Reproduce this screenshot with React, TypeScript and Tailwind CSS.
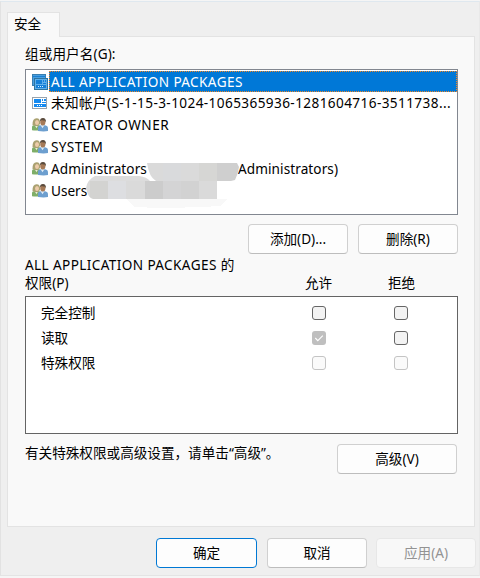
import React from "react";

type Kind = "packages" | "package" | "users";

function RowIcon({ kind }: { kind: Kind }) {
  if (kind === "packages")
    return (
      <svg className="h-4 w-4 shrink-0" viewBox="0 0 16 16">
        <rect x="0.5" y="0.5" width="13" height="11" fill="#4a9fe0" stroke="#3a7fb0" />
        <path d="M1 2.5h12" stroke="#1a80d2" />
        <rect x="2.5" y="4.5" width="13" height="11" fill="#5fb0ec" stroke="#2f749f" />
        <path d="M4 6h6v4H4zM11 6h1v2h-1zM13 6h1v2h-1zM11 9h3v1h-3zM4 11h10v3H4z" fill="#1580d8" />
        <path d="M6 12h1v1H6zM8 12h1v1H8zM10 12h1v1h-1z" fill="#d7efff" />
      </svg>
    );
  if (kind === "package")
    return (
      <svg className="h-4 w-4 shrink-0" viewBox="0 0 16 16">
        <rect x="0.5" y="2.5" width="14" height="11" fill="#fff" stroke="#98a3ad" />
        <path d="M2 4h7v4H2zM10 4h1v2h-1zM12 4h2v2h-2zM10 7h4v1h-4zM2 9h12v3H2z" fill="#168af0" />
        <path d="M5 10h1v1H5zM7 10h1v1H7zM9 10h1v1H9z" fill="#fff" />
      </svg>
    );
  return (
    <svg className="h-4 w-4 shrink-0" viewBox="0 0 16 16">
      <path d="M0 13.3V10q0-2 3-2h3q2 0 3 2v3q-4 1-9 .3Z" fill="#7fae68" />
      <path d="m2.5 8 2 3.3 1.8-3.3Z" fill="#edecd8" />
      <path d="M.5 8Q.3 1.2 4.5 1.2T8 7L6 9H3Z" fill="#aaa171" />
      <ellipse cx="5" cy="5.5" rx="2" ry="2.6" fill="#edccaa" />
      <path d="M6 14v-3q0-2.5 3-2.7h4q3 .5 3 3V14q-4 .8-10 0Z" fill="#6d9fcf" />
      <path d="m8.5 8.2 2 3 2-3Z" fill="#dfecf6" />
      <ellipse cx="10.8" cy="5" rx="2.6" ry="3.6" fill="#a67a57" />
      <path d="M8 4.3q0-3.3 3-3.3t3 4.4l-1.2-1.8q-2 0-3-.6Z" fill="#5a4b3d" />
    </svg>
  );
}

function Button({ children, className }: { children: React.ReactNode; className: string }) {
  return (
    <button className={`flex h-[30px] items-center justify-center rounded-[4px] border pb-px whitespace-nowrap ${className}`}>
      {children}
    </button>
  );
}

const normal = "border-[#d0d0d0] border-b-[#bdbdbd] bg-[#fdfdfd]";

function Box({ state }: { state: "on" | "off" | "disabled" }) {
  if (state === "on")
    return (
      <span className="flex h-[14px] w-[14px] items-center justify-center rounded-[3px] bg-[#bfbfbf]">
        <svg className="h-[14px] w-[14px]" viewBox="0 0 14 14">
          <path d="m3.3 7 2.5 2.6 5-5" fill="none" stroke="#fff" strokeWidth="1.1" />
        </svg>
      </span>
    );
  return (
    <span
      className={
        state === "off"
          ? "h-[14px] w-[14px] rounded-[3px] border border-[#666] bg-[#f3f3f3]"
          : "h-[14px] w-[14px] rounded-[3px] border border-[#c4c4c4] bg-[#fafafa]"
      }
    />
  );
}

const rows: { kind: Kind; text: React.ReactNode; tracking: string }[] = [
  {
    kind: "package",
    text: "未知帐户(S-1-15-3-1024-1065365936-1281604716-3511738...",
    tracking: "tracking-[0.4px]",
  },
  { kind: "users", text: "CREATOR OWNER", tracking: "tracking-[0.5px]" },
  { kind: "users", text: "SYSTEM", tracking: "tracking-[0.35px]" },
  {
    kind: "users",
    text: (
      <span className="flex">
        <span className="w-[187px]">Administrators</span>
        <span>Administrators)</span>
      </span>
    ),
    tracking: "tracking-[0.08px]",
  },
  { kind: "users", text: "Users", tracking: "" },
];

function Redaction() {
  return (
    <svg className="absolute top-[92px] left-[60px] h-[47px] w-[156px]" viewBox="86 162 156 47" shapeRendering="crispEdges">
      <path d="M126 199H227L220 206Q170 209 135 207Z" fill="#f8f8f8" />
      <defs>
        <clipPath id="upper">
          <path d="M147 163H237L239 167Q238 174 235 180L231 181H156Q149 177 147 163Z" />
        </clipPath>
        <clipPath id="lower">
          <path d="M86 188Q87 180 95 176H139Q147 177 150 181H217V199H93Q88 198 86 188Z" />
        </clipPath>
      </defs>
      <g clipPath="url(#upper)">
        <path d="M145 163h18v18h-18z" fill="#dadada" />
        <path d="M163 163h18v18h-18z" fill="#d9dadc" />
        <path d="M181 163h18v18h-18z" fill="#dadada" />
        <path d="M199 163h18v18h-18z" fill="#d6d6d4" />
        <path d="M217 163h22v18h-22z" fill="#cfcfcf" />
      </g>
      <g clipPath="url(#lower)">
        <path d="M86 176h64v5H86z" fill="#dcdcdc" />
        <path d="M86 181h4v18h-4z" fill="#dadada" />
        <path d="M90 181h18v18H90z" fill="#d3d3d1" />
        <path d="M108 181h18v18h-18z" fill="#dddee1" />
        <path d="M126 181h19v18h-19z" fill="#dadada" />
        <path d="M145 181h18v18h-18z" fill="#cccccc" />
        <path d="M163 181h18v18h-18z" fill="#d4d4d5" />
        <path d="M181 181h18v18h-18z" fill="#d2d2d2" />
        <path d="M199 181h18v18h-18z" fill="#dadada" />
      </g>
    </svg>
  );
}

export default function App() {
  return (
    <div className="flex h-[578px] w-[480px] flex-col bg-[#f5f5f5] pt-px font-['Noto_Sans','Noto_Sans_CJK_SC',sans-serif] text-[13.6px] leading-[18px] text-black">
      <div className="flex h-[575px] w-[480px] flex-col border-t border-r border-b border-l border-t-[#dfe8ef] border-r-[#e9e9e9] border-b-[#e4e4e4] border-l-[#e2e2e2] bg-[#efefef] pt-[10px] pl-[6px]">
        <div className="z-10 -mb-px flex h-[25px] w-[53px] items-center border border-b-0 border-[#e3e3e3] bg-[#f9f9f9] pb-[2px] pl-[6px]">
          安全
        </div>
        <div className="h-[491px] w-[468px] shrink-0 border border-[#e3e3e3] bg-[#f9f9f9] pt-[8px] pl-[17px]">
          <div className="h-6 tracking-[0.1px] whitespace-nowrap">组或用户名(G):</div>
          <div className="relative h-[146px] w-[433px] border border-[#828790] bg-white pt-px">
            <div className="flex h-[21px] items-center pl-[6px]">
              <RowIcon kind="packages" />
              <div className="ml-px flex h-[21px] flex-1 items-center self-start border border-dotted border-[#f08726] bg-[#0078d7] pl-px tracking-[0.38px] whitespace-nowrap text-white">
                ALL APPLICATION PACKAGES
              </div>
            </div>
            {rows.map((r, i) => (
              <div key={i} className="flex h-[21.9px] items-center pl-[6px] whitespace-nowrap">
                <RowIcon kind={r.kind} />
                <div className={`ml-[3px] ${r.tracking}`}>{r.text}</div>
              </div>
            ))}
            <Redaction />
          </div>
          <div className="mt-[9px] flex gap-[10px] pl-[223px]">
            <Button className={`w-[100px] ${normal}`}>添加(D)...</Button>
            <Button className={`w-[100px] ${normal}`}>删除(R)</Button>
          </div>
          <div className="mt-[2px] flex h-[40px] items-end whitespace-nowrap">
            <div className="w-[280px] pb-1">
              <span className="tracking-[0.38px]">ALL APPLICATION PACKAGES 的</span>
              <br />
              权限(P)
            </div>
            <div className="w-[83px] pb-1">允许</div>
            <div className="pb-1">拒绝</div>
          </div>
          <div className="grid h-[138px] w-[433px] grid-cols-[271px_82px_1fr] grid-rows-[25px_25px_25px] items-center border border-[#646464] bg-white pt-[3px] pl-[15px]">
            <span>完全控制</span>
            <Box state="off" />
            <Box state="off" />
            <span>读取</span>
            <Box state="on" />
            <Box state="off" />
            <span>特殊权限</span>
            <Box state="disabled" />
            <Box state="disabled" />
          </div>
          <div className="mt-[10px] flex">
            <div className="w-[312px] whitespace-nowrap">有关特殊权限或高级设置，请单击“高级”。</div>
            <Button className={`w-[120px] ${normal}`}>高级(V)</Button>
          </div>
        </div>
        <div className="mt-[11px] flex pl-[149px]">
          <Button className="w-[101px] border-[#0078d4] bg-[#fdfdfd]">确定</Button>
          <Button className={`ml-[10px] w-[100px] ${normal}`}>取消</Button>
          <Button className="ml-[9px] w-[100px] border-[#e7e7e7] bg-[#f8f8f8] text-[#939393]">应用(A)</Button>
        </div>
      </div>
    </div>
  );
}
